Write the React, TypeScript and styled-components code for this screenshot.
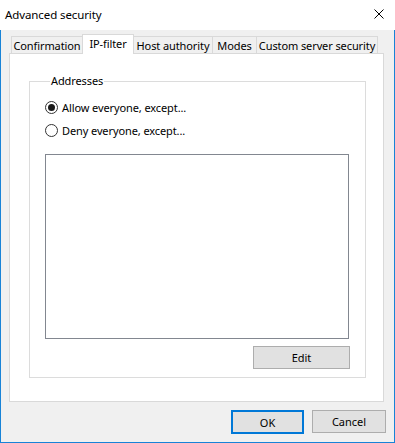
import React from "react";
import styled, { createGlobalStyle } from "styled-components";

const Global = createGlobalStyle`
  html, body { margin: 0; padding: 0; background: #ffffff; }
  * { box-sizing: border-box; }
  body { font-family: "Noto Sans", "Segoe UI", sans-serif; font-size: 11px; color: #000; }
`;

const Window = styled.div`
  width: 395px;
  height: 443px;
  background: #f0f0f0;
  border: 1px solid #1883d7;
  border-top: none;
  display: flex;
  flex-direction: column;
`;

const TitleBar = styled.div`
  height: 30px;
  background: #ffffff;
  display: flex;
  align-items: center;
  justify-content: space-between;
  margin: 0 -1px;
  padding: 0 11px 2px 5px;
  font-size: 11.5px;
  letter-spacing: -0.1px;
`;

const Body = styled.div`
  flex: 1;
  display: flex;
  flex-direction: column;
  padding: 4px 10px 0 8px;
`;

const TabRow = styled.div`
  display: flex;
  align-items: flex-end;
  height: 19px;
  padding-left: 2px;
  position: relative;
  z-index: 1;
`;

const Tab = styled.div<{ $w: number; $active?: boolean }>`
  width: ${(p) => p.$w}px;
  height: ${(p) => (p.$active ? 20 : 17)}px;
  margin-bottom: ${(p) => (p.$active ? -1 : 0)}px;
  margin-left: -1px;
  background: ${(p) => (p.$active ? "#ffffff" : "#f0f0f0")};
  border: 1px solid #d9d9d9;
  border-bottom: none;
  display: flex;
  align-items: center;
  justify-content: center;
  white-space: nowrap;
  font-size: 11px;
  letter-spacing: -0.1px;
  padding-bottom: ${(p) => (p.$active ? 2 : 0)}px;
  position: relative;
  z-index: ${(p) => (p.$active ? 2 : 1)};
  &:first-child { margin-left: 0; }
`;

const Panel = styled.div`
  height: 349px;
  background: #ffffff;
  border: 1px solid #d9d9d9;
  padding: 19px 17px 23px 19px;
  display: flex;
`;

const Group = styled.fieldset`
  flex: 1;
  margin: 0;
  border: 1px solid #dcdcdc;
  padding: 12px 14px 8px 15px;
  display: flex;
  flex-direction: column;
  min-width: 0;
`;

const Legend = styled.legend`
  padding: 0 1px;
  margin-left: 5px;
  font-size: 11px;
  line-height: 16px;
  letter-spacing: -0.1px;
`;

const RadioRow = styled.label`
  display: flex;
  align-items: center;
  gap: 4px;
  height: 13px;
  margin-bottom: 10px;
  font-size: 11px;
  letter-spacing: -0.1px;
`;

const RadioCircle = styled.span<{ $checked?: boolean }>`
  width: 13px;
  height: 13px;
  border-radius: 50%;
  border: 1px solid #333333;
  background: #ffffff;
  display: flex;
  align-items: center;
  justify-content: center;
  flex: none;
  &::after {
    content: "";
    width: 7px;
    height: 7px;
    border-radius: 50%;
    background: #1a1a1a;
    display: ${(p) => (p.$checked ? "block" : "none")};
  }
`;

const ListBox = styled.div`
  margin-top: 7px;
  height: 185px;
  width: 304px;
  border: 1px solid #828790;
  background: #ffffff;
  flex: none;
`;

const EditRow = styled.div`
  display: flex;
  justify-content: flex-end;
  margin-top: 7px;
  margin-right: 1px;
`;

const Button = styled.button<{ $w: number; $default?: boolean }>`
  width: ${(p) => p.$w}px;
  height: ${(p) => (p.$default ? 24 : 23)}px;
  background: #e1e1e1;
  border: ${(p) => (p.$default ? "2px solid #0078d7" : "1px solid #adadad")};
  font-family: "Noto Sans", "Segoe UI", sans-serif;
  font-size: 11px;
  color: #000;
  padding: 0;
  border-radius: 0;
  display: flex;
  align-items: center;
  justify-content: center;
`;

const Footer = styled.div`
  display: flex;
  justify-content: flex-end;
  gap: 8px;
  padding-top: 8px;
  margin-right: -2px;
`;

export default function App() {
  return (
    <>
      <Global />
      <Window>
        <TitleBar>
          <span>Advanced security</span>
          <svg width="10" height="10" viewBox="0 0 10 10">
            <path d="M0.5 0.5 L9.5 9.5 M9.5 0.5 L0.5 9.5" stroke="#000" strokeWidth="1" />
          </svg>
        </TitleBar>
        <Body>
          <TabRow>
            <Tab $w={72}>Confirmation</Tab>
            <Tab $w={52} $active>IP-filter</Tab>
            <Tab $w={80}>Host authority</Tab>
            <Tab $w={45}>Modes</Tab>
            <Tab $w={122}>Custom server security</Tab>
          </TabRow>
          <Panel>
            <Group>
              <Legend>Addresses</Legend>
              <RadioRow>
                <RadioCircle $checked />
                Allow everyone, except...
              </RadioRow>
              <RadioRow>
                <RadioCircle />
                Deny everyone, except...
              </RadioRow>
              <ListBox />
              <EditRow>
                <Button $w={97}>Edit</Button>
              </EditRow>
            </Group>
          </Panel>
          <Footer>
            <Button $w={73} $default>OK</Button>
            <Button $w={74}>Cancel</Button>
          </Footer>
        </Body>
      </Window>
    </>
  );
}
